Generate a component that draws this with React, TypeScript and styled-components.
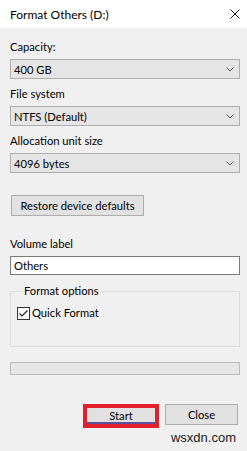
import React from 'react';
import styled, { createGlobalStyle } from 'styled-components';

const GlobalStyle = createGlobalStyle`
    html, body {
        margin: 0;
        padding: 0;
        background: #f0f0f0;
        font-family: Lato, "Liberation Sans", sans-serif;
        font-size: 11.2px;
        color: #000;
    }
`
const Window = styled.div`
    width: 247px;
    height: 451px;
    display: flex;
    flex-direction: column;
    background: #f0f0f0;
    overflow: hidden;
`
const TitleBar = styled.div`
    height: 28px;
    flex: none;
    background: #fff;
    display: flex;
    align-items: center;
    justify-content: space-between;
    padding: 0 7px 0 10px;
    font-size: 12px;
`
const Body = styled.div`
    flex: 1;
    display: flex;
    flex-direction: column;
    padding: 11px 7px 0 10px;
`
const Field = styled.div`
    display: flex;
    flex-direction: column;
    gap: 4px;
    & + & {
        margin-top: 7px;
    }
`
const Label = styled.div`
    line-height: 16px;
`
const Select = styled.div`
    height: 20px;
    box-sizing: border-box;
    border: 1px solid #adadad;
    background: #e5e5e5;
    display: flex;
    align-items: center;
    justify-content: space-between;
    padding: 0 5px 0 3px;
`
const Button = styled.div<{ $width: number }>`
    width: ${p => p.$width}px;
    height: 21px;
    box-sizing: border-box;
    border: 1px solid #adadad;
    background: #e1e1e1;
    display: flex;
    align-items: center;
    justify-content: center;
`
const RestoreButton = styled(Button)`
    margin-top: 22px;
    margin-left: 1px;
`
const VolumeField = styled(Field)`
    margin-top: 20px;
`
const TextInput = styled.div`
    height: 19px;
    box-sizing: border-box;
    border: 1px solid #7a7a7a;
    background: #fff;
    display: flex;
    align-items: center;
    padding: 0 3px;
`
const Group = styled.fieldset`
    margin: 8px 0 0 0;
    padding: 6px 7px 25px 6px;
    border: 1px solid #dcdcdc;
    border-radius: 0;
    min-width: 0;
`
const Legend = styled.legend`
    margin-left: 5px;
    padding: 0 2px;
    line-height: 16px;
`
const CheckRow = styled.label`
    display: flex;
    align-items: center;
    gap: 2px;
    line-height: 16px;
`
const Progress = styled.div`
    margin-top: 15px;
    height: 13px;
    box-sizing: border-box;
    border: 1px solid #bcbcbc;
    background: #e6e6e6;
`
const ButtonRow = styled.div`
    margin-top: 29px;
    display: flex;
    justify-content: flex-end;
    align-items: flex-start;
    gap: 6px;
    padding-right: 2px;
`
const Highlight = styled.div`
    border: 4px solid #e2202d;
    display: flex;
`
const StartButton = styled(Button)`
    height: 16px;
    border: none;
    border-bottom: 2px solid #5a4f99;
    padding-top: 1px;
`
const Watermark = styled.div`
    margin-top: 2px;
    text-align: right;
    padding-right: 4px;
    font-family: "Liberation Sans", sans-serif;
    font-size: 13px;
    line-height: 16px;
    color: #1a1a1a;
`

const Chevron = () => (
    <svg width="8" height="5" viewBox="0 0 8 5">
        <path d="M0.5 0.5 L4 4 L7.5 0.5" fill="none" stroke="#606060" strokeWidth="1" />
    </svg>
)

const CloseIcon = () => (
    <svg width="10" height="10" viewBox="0 0 10 10">
        <path d="M0.5 0.5 L9.5 9.5 M9.5 0.5 L0.5 9.5" stroke="#222" strokeWidth="1" />
    </svg>
)

const CheckIcon = () => (
    <svg width="13" height="13" viewBox="0 0 13 13">
        <rect x="0.5" y="0.5" width="12" height="12" fill="#fff" stroke="#333" />
        <path d="M2.5 6.5 L5 9 L10.5 3.5" fill="none" stroke="#222" strokeWidth="1.2" />
    </svg>
)

const fields = [
    { label: 'Capacity:', value: '400 GB' },
    { label: 'File system', value: 'NTFS (Default)' },
    { label: 'Allocation unit size', value: '4096 bytes' },
]

const App: React.FC = () => {
    return (
        <Window>
            <GlobalStyle />
            <TitleBar>
                <span>Format Others (D:)</span>
                <CloseIcon />
            </TitleBar>
            <Body>
                {fields.map(f => (
                    <Field key={f.label}>
                        <Label>{f.label}</Label>
                        <Select>
                            <span>{f.value}</span>
                            <Chevron />
                        </Select>
                    </Field>
                ))}
                <RestoreButton $width={133}>Restore device defaults</RestoreButton>
                <VolumeField>
                    <Label>Volume label</Label>
                    <TextInput>Others</TextInput>
                </VolumeField>
                <Group>
                    <Legend>Format options</Legend>
                    <CheckRow>
                        <CheckIcon />
                        <span>Quick Format</span>
                    </CheckRow>
                </Group>
                <Progress />
                <ButtonRow>
                    <Highlight>
                        <StartButton $width={68}>Start</StartButton>
                    </Highlight>
                    <Button $width={73}>Close</Button>
                </ButtonRow>
                <Watermark>wsxdn.com</Watermark>
            </Body>
        </Window>
    )
}

export default App;
